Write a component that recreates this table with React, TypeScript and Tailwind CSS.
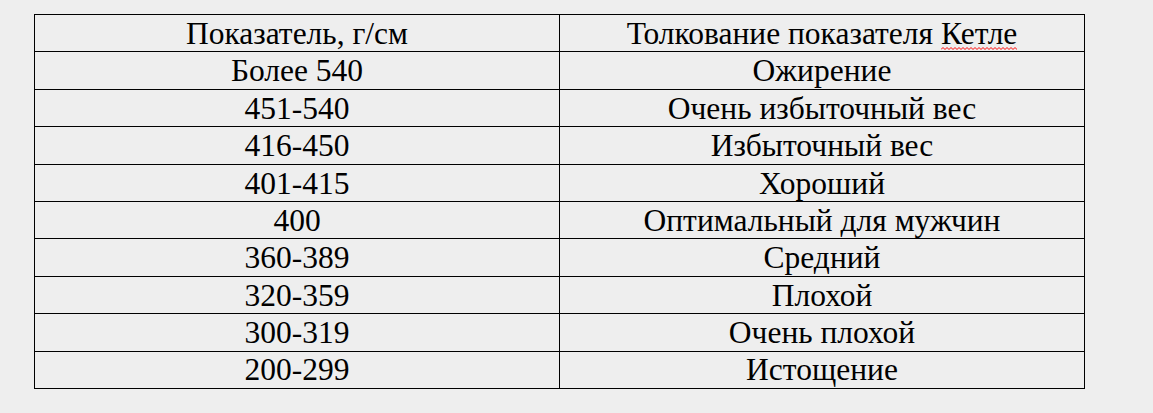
import React from "react";

const rows: [string, string][] = [
  ["Более 540", "Ожирение"],
  ["451-540", "Очень избыточный вес"],
  ["416-450", "Избыточный вес"],
  ["401-415", "Хороший"],
  ["400", "Оптимальный для мужчин"],
  ["360-389", "Средний"],
  ["320-359", "Плохой"],
  ["300-319", "Очень плохой"],
  ["200-299", "Истощение"],
];

const cell =
  "border border-black text-center p-0 pt-[1px] font-['Liberation_Serif','Times_New_Roman',serif]";

const zig = Array.from({ length: 41 }, (_, i) => `${i * 2},${i % 2 === 0 ? 2.5 : 0.5}`).join(" ");

export default function App() {
  return (
    <div className="w-[1153px] h-[413px] bg-[#eeeeee] pt-[14px] pl-[34px] text-black font-['Liberation_Serif','Times_New_Roman',serif]">
      <table className="border-collapse w-[1051px] table-fixed text-[31.5px] leading-none font-['Liberation_Serif','Times_New_Roman',serif]">
        <tbody>
          <tr className="h-[37.4px]">
            <td className={cell}>Показатель, г/см</td>
            <td className={cell}>
              Толкование показателя{" "}
              <span className="relative inline-block">
                Кетле
                <svg
                  className="absolute left-0 bottom-[-1px] w-full h-[3px] overflow-hidden"
                  viewBox="0 0 80 3"
                  preserveAspectRatio="xMinYMid slice"
                >
                  <polyline points={zig} fill="none" stroke="#ff0000" strokeWidth="1" />
                </svg>
              </span>
            </td>
          </tr>
          {rows.map(([a, b]) => (
            <tr key={a} className="h-[37.4px]">
              <td className={cell}>{a}</td>
              <td className={cell}>{b}</td>
            </tr>
          ))}
        </tbody>
      </table>
    </div>
  );
}
